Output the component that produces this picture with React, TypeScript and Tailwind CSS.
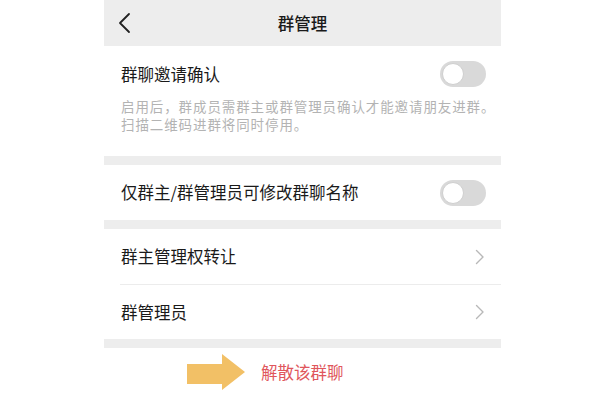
import React from 'react';

const Toggle: React.FC = () => (
  <div className="w-[46px] h-[26px] rounded-full bg-[#d9d9d9] p-[2px] flex items-center">
    <div className="w-[22px] h-[22px] rounded-full bg-white border border-[#cfcfcf]" />
  </div>
);

const Chevron: React.FC = () => (
  <svg width="10" height="16" viewBox="0 0 10 16" fill="none">
    <polyline points="1.5,1.5 8,8 1.5,14.5" stroke="#b8b8b8" strokeWidth="1.4" strokeLinecap="round" strokeLinejoin="round" />
  </svg>
);

const Gap: React.FC = () => <div className="h-[9px] bg-[#ededed]" />;

export default function App() {
  return (
    <div
      className="w-[599px] h-[400px] bg-white overflow-hidden"
      style={{ fontFamily: '"Noto Sans CJK SC", "Noto Sans", sans-serif' }}
    >
      <div className="ml-[104px] w-[397px] flex flex-col">
        {/* Header */}
        <div className="h-[46px] bg-[#ededed] flex items-center relative">
          <div className="pl-[14px] flex items-center">
            <svg width="14" height="22" viewBox="0 0 14 22" fill="none">
              <polyline points="11,2 2,11 11,20" stroke="#222" strokeWidth="1.8" strokeLinecap="round" strokeLinejoin="round" />
            </svg>
          </div>
          <div className="absolute inset-0 flex items-center justify-center">
            <span className="text-[16.5px] font-medium text-[#1a1a1a]">群管理</span>
          </div>
        </div>

        {/* Invite confirm */}
        <div className="bg-white pl-[17px] pr-[15px] pt-[15px] pb-[23px]">
          <div className="h-[26px] flex items-center justify-between">
            <span className="text-[16.5px] text-[#1a1a1a]">群聊邀请确认</span>
            <Toggle />
          </div>
          <div className="mt-[10px] text-[13.5px] leading-[18px] tracking-[0.9px] text-[#b3b3b3] whitespace-nowrap">
            <div>启用后，群成员需群主或群管理员确认才能邀请朋友进群。</div>
            <div>扫描二维码进群将同时停用。</div>
          </div>
        </div>

        <Gap />

        <div className="h-[55px] bg-white pl-[17px] pr-[15px] flex items-center justify-between">
          <span className="text-[16.5px] text-[#1a1a1a]">仅群主/群管理员可修改群聊名称</span>
          <Toggle />
        </div>

        <Gap />

        <div className="h-[55px] bg-white pl-[17px] pr-[16px] flex items-center justify-between">
          <span className="text-[16.5px] text-[#1a1a1a]">群主管理权转让</span>
          <Chevron />
        </div>
        <div className="h-px bg-[#ececec] ml-[16px]" />
        <div className="h-[54px] bg-white pl-[17px] pr-[16px] flex items-center justify-between">
          <span className="text-[16.5px] text-[#1a1a1a]">群管理员</span>
          <Chevron />
        </div>

        <Gap />

        {/* Dissolve */}
        <div className="h-[48px] flex items-center pl-[83px] gap-[16px]">
          <svg width="58" height="36" viewBox="0 0 58 36">
            <polygon points="0,10 35,10 35,0 58,18 35,36 35,30 0,30" fill="#f2c066" />
          </svg>
          <span className="text-[16.5px] text-[#e0565c]">解散该群聊</span>
        </div>
      </div>
    </div>
  );
}
